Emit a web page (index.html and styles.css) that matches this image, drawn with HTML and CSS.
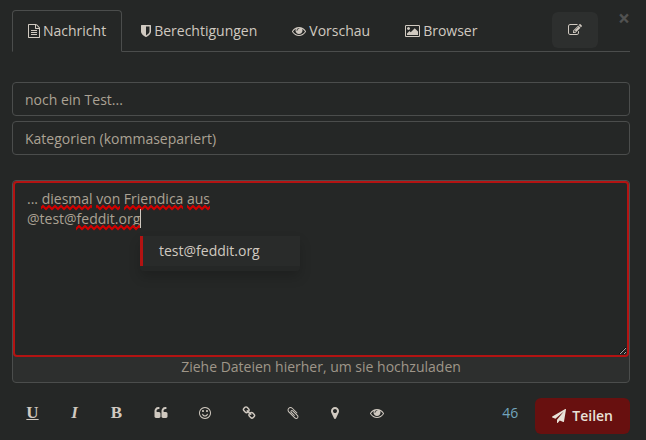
FILE: index.html
```html
<!DOCTYPE html>
<html lang="de">
<head>
    <meta charset="UTF-8">
    <meta name="viewport" content="width=device-width, initial-scale=1.0">
    <title>Neuer Beitrag</title>
    <link rel="stylesheet" href="styles.css">
</head>
<body>

<form class="composer">
    <header class="composer-header">
        <nav class="tabs">
            <a class="tab active" href="#message">
                <svg class="icon icon-12" viewBox="128 0 1536 1792"><path d="M1596 380q28 28 48 76t20 88v1152q0 40-28 68t-68 28h-1344q-40 0-68-28t-28-68v-1600q0-40 28-68t68-28h896q40 0 88 20t76 48zm-444-244v376h376q-10-29-22-41l-313-313q-12-12-41-22zm384 1528v-1024h-416q-40 0-68-28t-28-68v-416h-768v1536h1280zm-1024-864q0-14 9-23t23-9h704q14 0 23 9t9 23v64q0 14-9 23t-23 9h-704q-14 0-23-9t-9-23v-64zm736 224q14 0 23 9t9 23v64q0 14-9 23t-23 9h-704q-14 0-23-9t-9-23v-64q0-14 9-23t23-9h704zm0 256q14 0 23 9t9 23v64q0 14-9 23t-23 9h-704q-14 0-23-9t-9-23v-64q0-14 9-23t23-9h704z"/></svg>
                Nachricht
            </a>
            <a class="tab" href="#permissions">
                <svg class="icon icon-10" viewBox="256 0 1280 1792"><path d="M1344 960v-640h-448v1137q119-63 213-137 235-184 235-360zm192-768v768q0 86-33.5 170.5t-83 150-118 127.5-126.5 103-121 77.5-89.5 49.5-42.5 20q-12 6-26 6t-26-6q-16-7-42.5-20t-89.5-49.5-121-77.5-126.5-103-118-127.5-83-150-33.5-170.5v-768q0-26 19-45t45-19h1152q26 0 45 19t19 45z"/></svg>
                Berechtigungen
            </a>
            <a class="tab" href="#preview">
                <svg class="icon icon-14" viewBox="0 0 1792 1792"><path d="M1664 960q-152-236-381-353 61 104 61 225 0 185-131.5 316.5t-316.5 131.5-316.5-131.5-131.5-316.5q0-121 61-225-229 117-381 353 133 205 333.5 326.5t434.5 121.5 434.5-121.5 333.5-326.5zm-720-384q0-20-14-34t-34-14q-125 0-214.5 89.5t-89.5 214.5q0 20 14 34t34 14 34-14 14-34q0-86 61-147t147-61q20 0 34-14t14-34zm848 384q0 34-20 69-140 230-376.5 368.5t-499.5 138.5-499.5-139-376.5-368q-20-35-20-69t20-69q140-229 376.5-368t499.5-139 499.5 139 376.5 368q20 35 20 69z"/></svg>
                Vorschau
            </a>
            <a class="tab" href="#browser">
                <svg class="icon icon-15" viewBox="-64 0 1920 1792"><path d="M576 576q0 80-56 136t-136 56-136-56-56-136 56-136 136-56 136 56 56 136zm1024 384v448h-1408v-192l320-320 160 160 512-512zm96-704h-1600q-13 0-22.5 9.5t-9.5 22.5v1216q0 13 9.5 22.5t22.5 9.5h1600q13 0 22.5-9.5t9.5-22.5v-1216q0-13-9.5-22.5t-22.5-9.5zm160 32v1216q0 66-47 113t-113 47h-1600q-66 0-113-47t-47-113v-1216q0-66 47-113t113-47h1600q66 0 113 47t47 113z"/></svg>
                Browser
            </a>
        </nav>
        <button type="button" class="edit-btn" aria-label="Editor">
            <svg class="icon icon-14" viewBox="0 0 1792 1792"><path d="M888 1184l116-116-152-152-116 116v56h96v96h56zm440-720q-16-16-33 1l-350 350q-17 17-1 33t33-1l350-350q17-17 1-33zm80 594v190q0 119-84.5 203.5t-203.5 84.5h-832q-119 0-203.5-84.5t-84.5-203.5v-832q0-119 84.5-203.5t203.5-84.5h832q63 0 117 25 15 7 18 23 3 17-9 29l-49 49q-14 14-32 8-23-6-45-6h-832q-66 0-113 47t-47 113v832q0 66 47 113t113 47h832q66 0 113-47t47-113v-126q0-13 9-22l64-64q15-15 35-7t20 29zm-96-738l288 288-672 672h-288v-288zm444 132l-92 92-288-288 92-92q28-28 68-28t68 28l152 152q28 28 28 68t-28 68z"/></svg>
        </button>
        <button type="button" class="close-btn" aria-label="Schließen">×</button>
    </header>

    <div class="fields">
        <input class="field" type="text" aria-label="Titel" value="noch ein Test...">
        <input class="field" type="text" aria-label="Kategorien" placeholder="Kategorien (kommasepariert)">
    </div>

    <div class="dropzone">
        <div class="editor">
            <textarea class="editor-text" aria-label="Nachricht" spellcheck="false">... diesmal von Friendica aus
@test@feddit.org</textarea>
            <!-- spelling marks and caret -->
            <svg class="marks" width="240" height="60" aria-hidden="true">
                <defs>
                    <pattern id="wave" width="6" height="20" patternUnits="userSpaceOnUse">
                        <path class="wave" d="M-1 4l1 1 3 3 3-3 1-1"/>
                    </pattern>
                </defs>
                <g fill="url(#wave)">
                    <rect x="28" y="20" width="51" height="10"/>
                    <rect x="83" y="20" width="24" height="10"/>
                    <rect x="111" y="20" width="59" height="10"/>
                    <rect x="174" y="20" width="23" height="10"/>
                    <rect x="63" y="40" width="64" height="10"/>
                </g>
                <rect class="caret" x="127" y="28" width="1" height="19"/>
            </svg>
            <ul class="suggestions">
                <li><a class="suggestion" href="#mention">test@feddit.org</a></li>
            </ul>
        </div>
        <div class="drop-hint">Ziehe Dateien hierher, um sie hochzuladen</div>
    </div>

    <footer class="toolbar">
        <div class="tools">
            <button type="button" class="tool letter underline" aria-label="Unterstrichen">U</button>
            <button type="button" class="tool narrow letter italic" aria-label="Kursiv">I</button>
            <button type="button" class="tool letter" aria-label="Fett">B</button>
            <button type="button" class="tool" aria-label="Zitat">
                <svg class="icon icon-14" viewBox="0 0 1792 1792"><path d="M832 960v384q0 80-56 136t-136 56h-384q-80 0-136-56t-56-136v-704q0-104 40.5-198.5t109.5-163.5 163.5-109.5 198.5-40.5h64q26 0 45 19t19 45v128q0 26-19 45t-45 19h-64q-106 0-181 75t-75 181v32q0 40 28 68t68 28h224q80 0 136 56t56 136zm896 0v384q0 80-56 136t-136 56h-384q-80 0-136-56t-56-136v-704q0-104 40.5-198.5t109.5-163.5 163.5-109.5 198.5-40.5h64q26 0 45 19t19 45v128q0 26-19 45t-45 19h-64q-106 0-181 75t-75 181v32q0 40 28 68t68 28h224q80 0 136 56t56 136z"/></svg>
            </button>
            <button type="button" class="tool" aria-label="Emoji">
                <svg class="icon icon-14" viewBox="0 0 1792 1792"><path d="M1262 1075q-37 121-138 195t-228 74-228-74-138-195q-8-25 4-48.5t38-31.5q25-8 48.5 4t31.5 38q25 80 92.5 129.5t151.5 49.5 151.5-49.5 92.5-129.5q8-26 32-38t49-4 37 31.5 4 48.5zm-494-435q0 53-37.5 90.5t-90.5 37.5-90.5-37.5-37.5-90.5 37.5-90.5 90.5-37.5 90.5 37.5 37.5 90.5zm512 0q0 53-37.5 90.5t-90.5 37.5-90.5-37.5-37.5-90.5 37.5-90.5 90.5-37.5 90.5 37.5 37.5 90.5zm256 256q0-130-51-248.5t-136.5-204-204-136.5-248.5-51-248.5 51-204 136.5-136.5 204-51 248.5 51 248.5 136.5 204 204 136.5 248.5 51 248.5-51 204-136.5 136.5-204 51-248.5zm128 0q0 209-103 385.5t-279.5 279.5-385.5 103-385.5-103-279.5-279.5-103-385.5 103-385.5 279.5-279.5 385.5-103 385.5 103 279.5 279.5 103 385.5z"/></svg>
            </button>
            <button type="button" class="tool" aria-label="Link">
                <svg class="icon icon-14" viewBox="0 0 1792 1792"><path d="M1520 1216q0-40-28-68l-208-208q-28-28-68-28-42 0-72 32 3 3 19 18.5t21.5 21.5 15 19 13 25.5 3.5 27.5q0 40-28 68t-68 28q-15 0-27.5-3.5t-25.5-13-19-15-21.5-21.5-18.5-19q-33 31-33 73 0 40 28 68l206 207q27 27 68 27 40 0 68-26l147-146q28-28 28-67zm-703-705q0-40-28-68l-206-207q-28-28-68-28-39 0-68 27l-147 146q-28 28-28 67 0 40 28 68l208 208q27 27 68 27 42 0 72-31-3-3-19-18.5t-21.5-21.5-15-19-13-25.5-3.5-27.5q0-40 28-68t68-28q15 0 27.5 3.5t25.5 13 19 15 21.5 21.5 18.5 19q33-31 33-73zm895 705q0 120-85 203l-147 146q-83 83-203 83-121 0-204-85l-206-207q-83-83-83-203 0-123 88-209l-88-88q-86 88-208 88-120 0-204-84l-208-208q-84-84-84-204t85-203l147-146q83-83 203-83 121 0 204 85l206 207q83 83 83 203 0 123-88 209l88 88q86-88 208-88 120 0 204 84l208 208q84 84 84 204z"/></svg>
            </button>
            <button type="button" class="tool" aria-label="Anhang">
                <svg class="icon icon-14" viewBox="0 0 1792 1792"><path d="M1596 1385q0 117-79 196t-196 79q-135 0-235-100l-777-776q-113-115-113-271 0-159 110-270t269-111q158 0 273 113l605 606q10 10 10 22 0 16-30.5 46.5t-46.5 30.5q-13 0-23-10l-606-607q-79-77-181-77-106 0-179 75t-73 181q0 105 76 181l776 777q63 63 145 63 64 0 106-42t42-106q0-82-63-145l-581-581q-26-24-60-24-29 0-48 19t-19 48q0 32 25 59l410 410q10 10 10 22 0 16-31 47t-47 31q-12 0-22-10l-410-410q-63-61-63-149 0-82 57-139t139-57q88 0 149 63l581 581q100 98 100 235z"/></svg>
            </button>
            <button type="button" class="tool narrow" aria-label="Standort">
                <svg class="icon icon-14" viewBox="0 0 1792 1792"><path d="M1152 640q0-106-75-181t-181-75-181 75-75 181 75 181 181 75 181-75 75-181zm256 0q0 109-33 179l-364 774q-16 33-47.5 52t-67.5 19-67.5-19-46.5-52l-365-774q-33-70-33-179 0-212 150-362t362-150 362 150 150 362z"/></svg>
            </button>
            <button type="button" class="tool" aria-label="Vorschau">
                <svg class="icon icon-14" viewBox="0 0 1792 1792"><path d="M1664 960q-152-236-381-353 61 104 61 225 0 185-131.5 316.5t-316.5 131.5-316.5-131.5-131.5-316.5q0-121 61-225-229 117-381 353 133 205 333.5 326.5t434.5 121.5 434.5-121.5 333.5-326.5zm-720-384q0-20-14-34t-34-14q-125 0-214.5 89.5t-89.5 214.5q0 20 14 34t34 14 34-14 14-34q0-86 61-147t147-61q20 0 34-14t14-34zm848 384q0 34-20 69-140 230-376.5 368.5t-499.5 138.5-499.5-139-376.5-368q-20-35-20-69t20-69q140-229 376.5-368t499.5-139 499.5 139 376.5 368q20 35 20 69z"/></svg>
            </button>
        </div>
        <span class="char-count">46</span>
        <button type="submit" class="share-btn">
            <svg class="icon icon-14" viewBox="0 0 1792 1792"><path d="M1764 11q33 24 27 64l-256 1536q-5 29-32 45-14 8-31 8-11 0-24-5l-453-185-242 295q-18 23-49 23-13 0-22-4-19-7-30.5-23.5t-11.5-36.5v-349l864-1059-1069 925-395-162q-37-14-40-55-2-37 32-57l1664-960q15-9 32-9 20 0 36 11z"/></svg>
            Teilen
        </button>
    </footer>
</form>

</body>
</html>
```

FILE: styles.css
```css
* { box-sizing: border-box; }
body { margin: 0; background: #252726; color: #d0c9c0; font-family: "Open Sans", "Noto Sans", sans-serif; font-size: 14px; line-height: 20px; }
button, input, textarea { font: inherit; color: inherit; margin: 0; }
button { background: none; border: 0; padding: 0; }
a { color: inherit; text-decoration: none; }

.composer { padding: 10px 16px 6px 12px; }

/* Icons */
.icon { height: 14px; fill: currentColor; flex: none; }
.icon-10 { width: 10px; }
.icon-12 { width: 12px; }
.icon-14 { width: 14px; }
.icon-15 { width: 15px; }

/* Header with tabs */
.composer-header { position: relative; display: flex; border-bottom: 1px solid #4b4d4c; }
.tabs { display: flex; gap: 3px; flex: 1; margin-bottom: -1px; }
.tab { display: flex; align-items: center; gap: 3px; padding: 10px 15px; border: 1px solid transparent; border-radius: 4px 4px 0 0; }
.tab.active { background: #252726; border-color: #4b4d4c; border-bottom-color: #252726; }
.edit-btn { display: flex; align-items: center; justify-content: center; width: 46px; height: 36px; margin: 2px 32px 0 0; background: #2d2f2e; border-radius: 6px; }
.close-btn { position: absolute; top: -2px; right: 0; font-size: 21px; font-weight: bold; color: #515251; }

/* Title and categories */
.fields { display: grid; gap: 5px; padding: 30px 0 25px; }
.field { width: 100%; height: 34px; padding: 6px 12px; background: #252726; border: 1px solid #4b4d4c; border-radius: 4px; color: #aba294; }
.field::placeholder { color: #aba294; opacity: 1; }

/* Editor and upload area */
.dropzone { background: #2d2f2e; border: 1px solid #4b4d4c; border-radius: 4px; }
.editor { position: relative; display: flex; }
.editor-text { width: 100%; height: 176px; padding: 6px 12px; background: #252726; border: 2px solid #b31312; border-radius: 4px; color: #aba294; outline: 0; resize: vertical; }
.marks { position: absolute; top: 0; left: 0; pointer-events: none; }
.wave { fill: none; stroke: #d40000; stroke-width: 2; }
.caret { fill: #d0c9c0; }
.suggestions { position: absolute; top: 55px; left: 127px; width: 160px; margin: 0; padding: 0 0 5px; list-style: none; border-radius: 4px; box-shadow: 0 6px 12px rgba(0, 0, 0, 0.18); }
.suggestion { display: block; padding: 5px 16px; background: #292b2a; border-left: 3px solid #b31312; }
.drop-hint { padding: 0 0 5px; text-align: center; color: #9f9689; }

/* Bottom toolbar */
.toolbar { display: flex; align-items: flex-start; padding-top: 15px; }
.tools { display: flex; gap: 31px; flex: 1; padding-left: 14px; }
.tool { display: flex; align-items: center; justify-content: center; width: 13px; height: 30px; }
.tool.narrow { width: 9px; }
.letter { font-family: "Liberation Serif", serif; font-size: 17px; font-weight: bold; }
.underline { text-decoration: underline; }
.italic { font-style: italic; }
.char-count { line-height: 30px; color: #72a5bd; }
.share-btn { display: flex; align-items: center; gap: 6px; height: 36px; margin-left: 17px; padding: 0 17px; background: #68100f; border-radius: 6px; color: #e8e2d8; font-weight: 600; }
```
